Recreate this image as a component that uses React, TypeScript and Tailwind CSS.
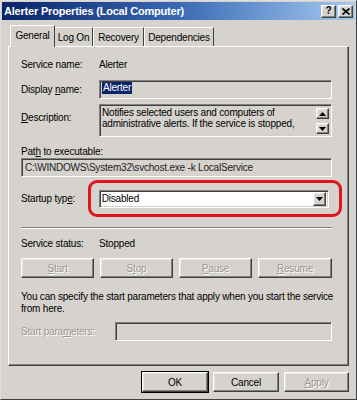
import React from "react";

const F = { fontFamily: '"Liberation Sans", Arial, sans-serif' };

const raised =
  "border border-t-white border-l-white border-r-[#404040] border-b-[#404040] shadow-[inset_-1px_-1px_0_#808080,inset_1px_1px_0_#e8e6e1]";
const sunken =
  "border border-t-[#808080] border-l-[#808080] border-r-white border-b-white shadow-[inset_1px_1px_0_#404040,inset_-1px_-1px_0_#d4d0c8]";
const dis = "text-[#9a968f] [text-shadow:1px_1px_0_#ffffff]";

function Btn({ children, w, disabled, def }: { children: React.ReactNode; w: string; disabled?: boolean; def?: boolean }) {
  return (
    <div
      className={`${w} h-[20px] flex items-center justify-center bg-[#d6d3ce] ${
        def ? "outline outline-1 outline-black " : ""
      }${raised} ${disabled ? dis : "text-black"}`}
    >
      {children}
    </div>
  );
}

function Arrow({ up }: { up?: boolean }) {
  return (
    <div className={`w-[13px] h-[11px] flex items-center justify-center bg-[#d6d3ce] ${raised}`}>
      <svg width="7" height="4" viewBox="0 0 7 4">
        {up ? <polygon points="3.5,0 7,4 0,4" fill="#000" /> : <polygon points="0,0 7,0 3.5,4" fill="#000" />}
      </svg>
    </div>
  );
}

export default function App() {
  return (
    <div
      style={F}
      className="w-[357px] h-[400px] bg-[#d6d3ce] text-[10px] tracking-[-0.2px] text-black flex flex-col border border-t-[#e0ded9] border-l-[#e0ded9] border-r-[#404040] border-b-[#404040] overflow-hidden whitespace-nowrap"
    >
      {/* title bar */}
      <div className="mx-[1px] mt-[1px] h-[18px] bg-gradient-to-r from-[#0a246a] via-[#3a6ab5] to-[#a6caf0] flex items-center justify-between pl-[2px] pr-[2px]">
        <span className="text-white font-bold text-[11px] tracking-[-0.2px]">Alerter Properties (Local Computer)</span>
        <div className="flex gap-[2px]">
          <div className={`w-[15px] h-[13px] bg-[#d6d3ce] ${raised} flex items-center justify-center font-bold text-[10px] leading-none`}>?</div>
          <div className={`w-[15px] h-[13px] bg-[#d6d3ce] ${raised} flex items-center justify-center`}>
            <svg width="8" height="7" viewBox="0 0 8 7">
              <path d="M0.5 0.5 L7.5 6.5 M7.5 0.5 L0.5 6.5" stroke="#000" strokeWidth="1.6" />
            </svg>
          </div>
        </div>
      </div>

      {/* tabs */}
      <div className="mt-[4px] pl-[9px] flex items-end h-[22px]">
        <div className="h-[22px] w-[45px] flex items-center justify-center border-t border-l border-t-white border-l-white border-r border-r-[#404040] bg-[#d6d3ce] relative z-10 -mb-[1px] pb-[2px]">
          General
        </div>
        <div className="h-[19px] w-[38px] flex items-center justify-center border-t border-t-white border-r border-r-[#404040]">Log On</div>
        <div className="h-[19px] w-[51px] flex items-center justify-center border-t border-t-white border-l border-l-white border-r border-r-[#404040]">Recovery</div>
        <div className="h-[19px] w-[70px] flex items-center justify-center border-t border-t-white border-l border-l-white border-r border-r-[#404040]">Dependencies</div>
      </div>

      {/* panel */}
      <div className="mx-[7px] h-[320px] border border-t-white border-l-white border-r-[#404040] border-b-[#404040] shadow-[inset_-1px_-1px_0_#808080] pl-[12px] pr-[16px] flex flex-col">
        <div className="mt-[10px] h-[14px] flex items-center">
          <span className="w-[78px]">Service name:</span>
          <span>Alerter</span>
        </div>
        <div className="mt-[9px] h-[19px] flex items-center">
          <span className="w-[78px]">Display <u>n</u>ame:</span>
          <div className={`flex-1 h-[19px] ${sunken} flex items-start pl-[2px] pt-[1px]`}>
            <span className="bg-[#0a246a] text-white leading-[12px] px-[1px]">Alerter</span>
          </div>
        </div>
        <div className="mt-[5px] h-[33px] flex items-start">
          <span className="w-[78px] mt-[6px]"><u>D</u>escription:</span>
          <div className={`flex-1 h-[33px] ${sunken} flex justify-between pl-[2px] pt-[2px] pr-[2px]`}>
            <div className="leading-[11px]">
              Notifies selected users and computers of
              <br />
              administrative alerts. If the service is stopped,
            </div>
            <div className="flex flex-col justify-between py-[2px] -mt-[1px]">
              <Arrow up />
              <Arrow />
            </div>
          </div>
        </div>
        <div className="mt-[8px] h-[12px] flex items-center">
          <span>Pat<u>h</u> to executable:</span>
        </div>
        <div className={`mt-[1px] h-[19px] ${sunken} flex items-center pl-[3px] text-[#222]`}>
          <span>C:\WINDOWS\System32\svchost.exe -k LocalService</span>
        </div>

        {/* startup type with red highlight */}
        <div className="mt-[3px] flex items-center">
          <span className="w-[67px]">Startup typ<u>e</u>:</span>
          <div className="w-[255px] h-[37px] border-[3px] border-[#e0151b] rounded-[9px] flex items-center pl-[8px] pr-[10px] -mr-[10px]">
            <div className={`flex-1 h-[18px] bg-white ${sunken} flex items-center justify-between pl-[2px] pr-[2px]`}>
              <span>Disabled</span>
              <div className={`w-[13px] h-[14px] flex items-center justify-center bg-[#d6d3ce] ${raised}`}>
                <svg width="7" height="4" viewBox="0 0 7 4">
                  <polygon points="0,0 7,0 3.5,4" fill="#000" />
                </svg>
              </div>
            </div>
          </div>
        </div>

        <div className="mt-[10px] h-[2px] border-t border-t-[#808080] border-b border-b-white" />

        <div className="mt-[8px] h-[12px] flex items-center">
          <span className="w-[78px]">Service status:</span>
          <span>Stopped</span>
        </div>

        <div className="mt-[9px] flex gap-[6px]">
          <Btn w="w-[73px]" disabled><span><u>S</u>tart</span></Btn>
          <Btn w="w-[73px]" disabled><span>S<u>t</u>op</span></Btn>
          <Btn w="w-[73px]" disabled><span><u>P</u>ause</span></Btn>
          <Btn w="w-[74px]" disabled><span><u>R</u>esume</span></Btn>
        </div>

        <div className="mt-[13px] leading-[12px]">
          You can specify the start parameters that apply when you start the service
          <br />
          from here.
        </div>

        <div className="mt-[7px] flex items-center">
          <span className={`w-[94px] ${dis}`}>Start para<u>m</u>eters:</span>
          <div className={`flex-1 h-[19px] ${sunken}`} />
        </div>
      </div>

      {/* bottom buttons */}
      <div className="mt-[6px] flex justify-end gap-[5px] pr-[7px]">
        <Btn w="w-[66px]" def><span>OK</span></Btn>
        <Btn w="w-[66px]"><span>Cancel</span></Btn>
        <Btn w="w-[65px]" disabled><span><u>A</u>pply</span></Btn>
      </div>
    </div>
  );
}
